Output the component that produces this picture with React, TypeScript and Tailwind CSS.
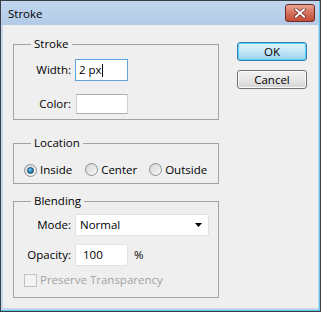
import React from "react";

function Radio({ checked }: { checked?: boolean }) {
  return (
    <span className="relative inline-flex w-[13px] h-[13px] rounded-full border border-[#8b8e91] bg-gradient-to-br from-[#d4d4d4] to-[#fbfbfb] items-center justify-center shrink-0">
      {checked ? (
        <span className="w-[7px] h-[7px] rounded-full bg-[radial-gradient(circle_at_40%_35%,#7fd4f5_0%,#2a8fc8_45%,#1b4f7c_100%)] border border-[#1d4a6e]" />
      ) : (
        <span className="w-[9px] h-[9px] rounded-full bg-gradient-to-br from-[#d9d9d9] to-[#f4f4f4]" />
      )}
    </span>
  );
}

export default function App() {
  return (
    <div className="w-[321px] h-[312px] bg-[#3a3f45] p-px font-['Open_Sans',sans-serif] text-[11.5px] leading-[16px] text-black">
      <div className="w-full h-full flex flex-col bg-[#c3d6ec] border-r border-b border-[#5cc3ec]">
        {/* title bar */}
        <div className="h-[24px] flex items-start justify-between bg-gradient-to-b from-[#c2d6ee] to-[#b3cbe7] pl-[7px] pr-[4px]">
          <span className="mt-[5px] leading-[16px]">Stroke</span>
          <div className="mt-[3px] w-[30px] h-[18px] rounded-[3px] border border-[#6e2a22] bg-gradient-to-b from-[#e8a593] via-[#d4705c] to-[#c24a34] flex items-center justify-center">
            <svg width="12" height="10" viewBox="0 0 12 10">
              <path d="M2 1.5 L10 8.5 M10 1.5 L2 8.5" stroke="#5a2018" strokeWidth="3.2" strokeLinecap="square" />
              <path d="M2 1.5 L10 8.5 M10 1.5 L2 8.5" stroke="#ffffff" strokeWidth="2" strokeLinecap="square" />
            </svg>
          </div>
        </div>
        {/* client */}
        <div className="flex-1 ml-[2px] mr-px mb-[2px] bg-[#efefef] flex">
          <div className="ml-[10px] w-[206px] flex flex-col">
            {/* Stroke */}
            <fieldset className="mt-[12px] border border-[#a3a3a3] pl-0 pr-0 pb-[5px] h-[83px]">
              <legend className="ml-[17px] px-[3px] leading-[14px]">Stroke</legend>
              <div className="grid grid-cols-[57px_auto] gap-x-[4px] gap-y-[13px] items-center pt-[8px]">
                <span className="text-right">Width:</span>
                <div className="w-[53px] h-[22px] border border-[#5fa2df] bg-white flex items-center pl-[3px]">
                  <span>2 px</span>
                  <span className="w-px h-[13px] bg-black" />
                </div>
                <span className="text-right">Color:</span>
                <div className="ml-px w-[52px] h-[20px] border border-[#abadb3] border-l-[#cfd3d8] border-r-[#cfd3d8] bg-white" />
              </div>
            </fieldset>
            {/* Location */}
            <fieldset className="mt-[16px] border border-[#a3a3a3] h-[48px]">
              <legend className="ml-[17px] px-[3px] leading-[14px]">Location</legend>
              <div className="flex items-center pt-[12px] pl-[10px]">
                <Radio checked />
                <span className="ml-[3px]">Inside</span>
                <span className="ml-[13px]"><Radio /></span>
                <span className="ml-[3px]">Center</span>
                <span className="ml-[12px]"><Radio /></span>
                <span className="ml-[3px]">Outside</span>
              </div>
            </fieldset>
            {/* Blending */}
            <fieldset className="mt-[10px] border border-[#a3a3a3] h-[104px]">
              <legend className="ml-[17px] px-[3px] leading-[14px]">Blending</legend>
              <div className="grid grid-cols-[57px_auto] gap-x-[4px] items-center pt-[6px]">
                <span className="text-right">Mode:</span>
                <div className="w-[134px] h-[22px] border border-[#e3e3e3] bg-white flex items-center justify-between pl-[4px] pr-[6px]">
                  <span>Normal</span>
                  <svg width="7" height="4" viewBox="0 0 7 4"><path d="M0 0 H7 L3.5 4 Z" fill="#000" /></svg>
                </div>
                <span className="text-right mt-[8px]">Opacity:</span>
                <div className="mt-[8px] flex items-center">
                  <div className="w-[53px] h-[22px] border border-[#e3e3e3] bg-white flex items-center pl-[7px]">
                    <span>100</span>
                  </div>
                  <span className="ml-[6px]">%</span>
                </div>
              </div>
              <div className="flex items-center pl-[10px] mt-[6px]">
                <span className="w-[13px] h-[13px] border border-[#c3c3c3] bg-[#f3f3f3]" />
                <span className="ml-[3px] text-[#a2a2a2]">Preserve Transparency</span>
              </div>
            </fieldset>
          </div>
          <div className="ml-[18px] mt-[17px] w-[70px] flex flex-col gap-[9px]">
            <button className="h-[19px] rounded-[3px] border border-[#3c7fb1] shadow-[inset_0_0_0_1px_#48d4f8] bg-gradient-to-b from-[#e5f4fc] via-[#c4e5f6] to-[#98d1ef] text-[11.5px] leading-[14px] font-['Open_Sans',sans-serif]">OK</button>
            <button className="h-[19px] rounded-[3px] border border-[#707070] shadow-[inset_0_0_0_1px_#fcfcfc] bg-gradient-to-b from-[#f2f2f2] via-[#e6e6e6] to-[#d3d3d3] text-[11.5px] leading-[14px] font-['Open_Sans',sans-serif]">Cancel</button>
          </div>
        </div>
      </div>
    </div>
  );
}
